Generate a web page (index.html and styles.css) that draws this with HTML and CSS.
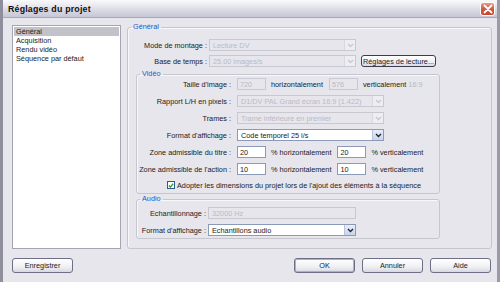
FILE: index.html
```html
<!DOCTYPE html>
<html lang="fr">

<head>
    <meta charset="UTF-8">
    <meta name="viewport" content="width=device-width, initial-scale=1.0">
    <title>Réglages du projet</title>
    <link rel="stylesheet" href="styles.css">
</head>

<body>
    <div class="window">
        <div class="titlebar">
            <span class="title">Réglages du projet</span>
            <span class="close">
                <svg width="10" height="10" viewBox="0 0 10 10">
                    <path d="M1.5 1.5 L8.5 8.5 M8.5 1.5 L1.5 8.5" stroke="#fff" stroke-width="1.8" stroke-linecap="round" />
                </svg>
            </span>
        </div>

        <div class="main">
            <ul class="nav">
                <li class="selected">Général</li>
                <li>Acquisition</li>
                <li>Rendu vidéo</li>
                <li>Séquence par défaut</li>
            </ul>

            <fieldset class="group group-general">
                <legend>Général</legend>

                <div class="row row-first">
                    <span class="lbl">Mode de montage :</span>
                    <div class="select disabled">Lecture DV<span class="arrow"><svg width="7" height="5" viewBox="0 0 7 5"><path d="M1 1 L3.5 3.5 L6 1" fill="none" stroke="currentColor" stroke-width="1.4" /></svg></span></div>
                </div>
                <div class="row">
                    <span class="lbl">Base de temps :</span>
                    <div class="select disabled">25.00 images/s<span class="arrow"><svg width="7" height="5" viewBox="0 0 7 5"><path d="M1 1 L3.5 3.5 L6 1" fill="none" stroke="currentColor" stroke-width="1.4" /></svg></span></div>
                    <button class="btn btn-small">Réglages de lecture...</button>
                </div>

                <!-- Vidéo -->
                <fieldset class="group group-video">
                    <legend>Vidéo</legend>
                    <div class="row row-first">
                        <span class="lbl">Taille d'image :</span>
                        <div class="input disabled">720</div>
                        <span class="txt">horizontalement</span>
                        <div class="input disabled">576</div>
                        <span class="txt">verticalement</span>
                        <span class="txt muted">16:9</span>
                    </div>
                    <div class="row">
                        <span class="lbl">Rapport L/H en pixels :</span>
                        <div class="select disabled">D1/DV PAL Grand écran 16:9 (1.422)<span class="arrow"><svg width="7" height="5" viewBox="0 0 7 5"><path d="M1 1 L3.5 3.5 L6 1" fill="none" stroke="currentColor" stroke-width="1.4" /></svg></span></div>
                    </div>
                    <div class="row">
                        <span class="lbl">Trames :</span>
                        <div class="select disabled">Trame inférieure en premier<span class="arrow"><svg width="7" height="5" viewBox="0 0 7 5"><path d="M1 1 L3.5 3.5 L6 1" fill="none" stroke="currentColor" stroke-width="1.4" /></svg></span></div>
                    </div>
                    <div class="row">
                        <span class="lbl">Format d'affichage :</span>
                        <div class="select">Code temporel 25 i/s<span class="arrow"><svg width="7" height="5" viewBox="0 0 7 5"><path d="M1 1 L3.5 3.5 L6 1" fill="none" stroke="currentColor" stroke-width="1.4" /></svg></span></div>
                    </div>
                    <div class="row">
                        <span class="lbl">Zone admissible du titre :</span>
                        <div class="input">20</div>
                        <span class="txt">% horizontalement</span>
                        <div class="input">20</div>
                        <span class="txt">% verticalement</span>
                    </div>
                    <div class="row">
                        <span class="lbl">Zone admissible de l'action :</span>
                        <div class="input">10</div>
                        <span class="txt">% horizontalement</span>
                        <div class="input">10</div>
                        <span class="txt">% verticalement</span>
                    </div>
                    <div class="row row-check">
                        <span class="check">
                            <svg width="7" height="7" viewBox="0 0 7 7"><path d="M1 3.5 L2.8 5.3 L6 1.5" fill="none" stroke="#21a121" stroke-width="1.5" /></svg>
                        </span>
                        <span class="txt">Adopter les dimensions du projet lors de l'ajout des éléments à la séquence</span>
                    </div>
                </fieldset>

                <!-- Audio -->
                <fieldset class="group group-audio">
                    <legend>Audio</legend>
                    <div class="row row-first">
                        <span class="lbl">Echantillonnage :</span>
                        <div class="select disabled no-arrow">32000 Hz</div>
                    </div>
                    <div class="row">
                        <span class="lbl">Format d'affichage :</span>
                        <div class="select">Echantillons audio<span class="arrow"><svg width="7" height="5" viewBox="0 0 7 5"><path d="M1 1 L3.5 3.5 L6 1" fill="none" stroke="currentColor" stroke-width="1.4" /></svg></span></div>
                    </div>
                </fieldset>
            </fieldset>
        </div>

        <div class="footer">
            <button class="btn">Enregistrer</button>
            <div class="actions">
                <button class="btn btn-default">OK</button>
                <button class="btn">Annuler</button>
                <button class="btn">Aide</button>
            </div>
        </div>
    </div>
</body>

</html>
```

FILE: styles.css
```css
body {
    margin: 0;
    padding: 0;
    font-family: "Liberation Sans", Arial, sans-serif;
    font-size: 7.3px;
    color: #222;
    background-color: #e6e6ec;
    overflow: hidden;
}

.window {
    box-sizing: border-box;
    width: 500px;
    height: 282px;
    border-left: 3px solid #8e8e9c;
    border-right: 3px solid #9a9aa8;
    background-color: #e6e6ec;
}

/* barre de titre */
.titlebar {
    display: flex;
    align-items: center;
    justify-content: space-between;
    height: 18px;
    padding: 0 2px 0 5px;
    background: linear-gradient(#fafafc, #dcdce6 55%, #c6c6d6);
    border-bottom: 1px solid #a8a8b8;
    box-sizing: border-box;
}

.title {
    font-size: 8.8px;
    font-weight: bold;
    letter-spacing: 0.2px;
    color: #111;
}

.close {
    display: flex;
    align-items: center;
    justify-content: center;
    width: 15px;
    height: 14px;
    border: 1px solid #fff;
    border-radius: 3px;
    background: linear-gradient(#e89a88, #d2583e 50%, #c8442c);
    box-sizing: border-box;
}

/* zone principale */
.main {
    display: flex;
    align-items: flex-start;
    gap: 6px;
    padding: 5px 0 0 9px;
    height: 231px;
    box-sizing: border-box;
}

.nav {
    list-style: none;
    margin: 2px 0 0;
    padding: 1px;
    width: 109px;
    height: 224px;
    box-sizing: border-box;
    background-color: #fff;
    border: 1px solid #a4a4b4;
}

.nav li {
    line-height: 9px;
    height: 9px;
    padding-left: 2px;
}

.nav .selected {
    background-color: #c2c2ca;
}

/* cadres */
.group {
    margin: 0;
    padding: 0;
    min-inline-size: 0;
    border: 1px solid #c6c6ce;
    border-radius: 3px;
    box-shadow: inset 1px 1px 0 #f8f8fb;
}

.group legend {
    padding: 0 2px;
    margin-left: 3px;
    line-height: 8px;
    color: #2458c8;
}

.group-general {
    width: 365px;
    height: 226px;
    box-sizing: border-box;
}

.group-video {
    width: 304px;
    margin: 3px 0 0 8px;
    padding-bottom: 3px;
    box-sizing: border-box;
}

.group-audio {
    width: 304px;
    margin: 1px 0 0 8px;
    padding-bottom: 2px;
    box-sizing: border-box;
}

/* lignes */
.row {
    display: flex;
    align-items: center;
    height: 12px;
    margin-top: 4px;
}

.group-general > .row-first {
    margin-top: 8px;
}

.group-video .row {
    margin-top: 5px;
}

.group-video .row-first {
    margin-top: 0;
}

.group-audio .row {
    margin-top: 5px;
}

.group-audio .row-first {
    margin-top: 4px;
}

.lbl {
    flex: none;
    width: 79px;
    padding-right: 2px;
    text-align: right;
    white-space: nowrap;
}

.group-video .lbl {
    width: 94px;
    padding-right: 6px;
}

.group-audio .lbl {
    width: 69px;
}

.txt {
    white-space: nowrap;
    margin-left: 5px;
}

.txt.muted {
    margin-left: 2px;
    color: #b8b8c0;
}

/* listes déroulantes */
.select {
    position: relative;
    display: flex;
    align-items: center;
    width: 147px;
    height: 12px;
    padding-left: 3px;
    box-sizing: border-box;
    background-color: #fff;
    border: 1px solid #8a9ab8;
    white-space: nowrap;
    overflow: hidden;
}

.select.disabled {
    background-color: #e6e6ec;
    border-color: #c8c8d2;
    color: #babac4;
}

.select .arrow {
    position: absolute;
    top: 0;
    right: 0;
    bottom: 0;
    width: 10px;
    display: flex;
    align-items: center;
    justify-content: center;
    background: linear-gradient(#e8eef8, #c8d4ea);
    border-left: 1px solid #b8c4dc;
    color: #223;
}

.select.disabled .arrow {
    background: #eeeef2;
    border-left-color: #d8d8e0;
    color: #c8c8d0;
}

.group-audio .select {
    width: 148px;
}

/* champs texte */
.input {
    display: flex;
    align-items: center;
    width: 29px;
    height: 12px;
    padding-left: 2px;
    box-sizing: border-box;
    background-color: #fff;
    border: 1px solid #8a9ab8;
}

.input.disabled {
    background-color: #e6e6ec;
    border-color: #c8c8d2;
    color: #babac4;
}

.row .input + .txt {
    margin-left: 5px;
}

.row .txt + .input {
    margin-left: 6px;
}

.row-check {
    height: 10px;
    padding-left: 30px;
}

.check {
    display: flex;
    align-items: center;
    justify-content: center;
    width: 8px;
    height: 8px;
    box-sizing: border-box;
    background-color: #fff;
    border: 1px solid #2c5a8c;
}

.row-check .txt {
    margin-left: 2px;
}

/* boutons */
.btn {
    font-family: inherit;
    font-size: 7.3px;
    color: #222;
    width: 61px;
    height: 15px;
    padding: 0;
    border: 1px solid #6e6e86;
    border-radius: 3px;
    background: linear-gradient(#ffffff, #f0f0f4 60%, #d8d8e2);
    cursor: pointer;
}

.btn-small {
    width: 75px;
    height: 12px;
    margin-left: 5px;
    border-color: #3c3c54;
}

.btn-default {
    box-shadow: inset 0 0 0 1px #9cb4e4;
}

.footer {
    display: flex;
    justify-content: space-between;
    align-items: center;
    padding: 9px 6px 0 9px;
}

.actions {
    display: flex;
    gap: 7px;
}
```
